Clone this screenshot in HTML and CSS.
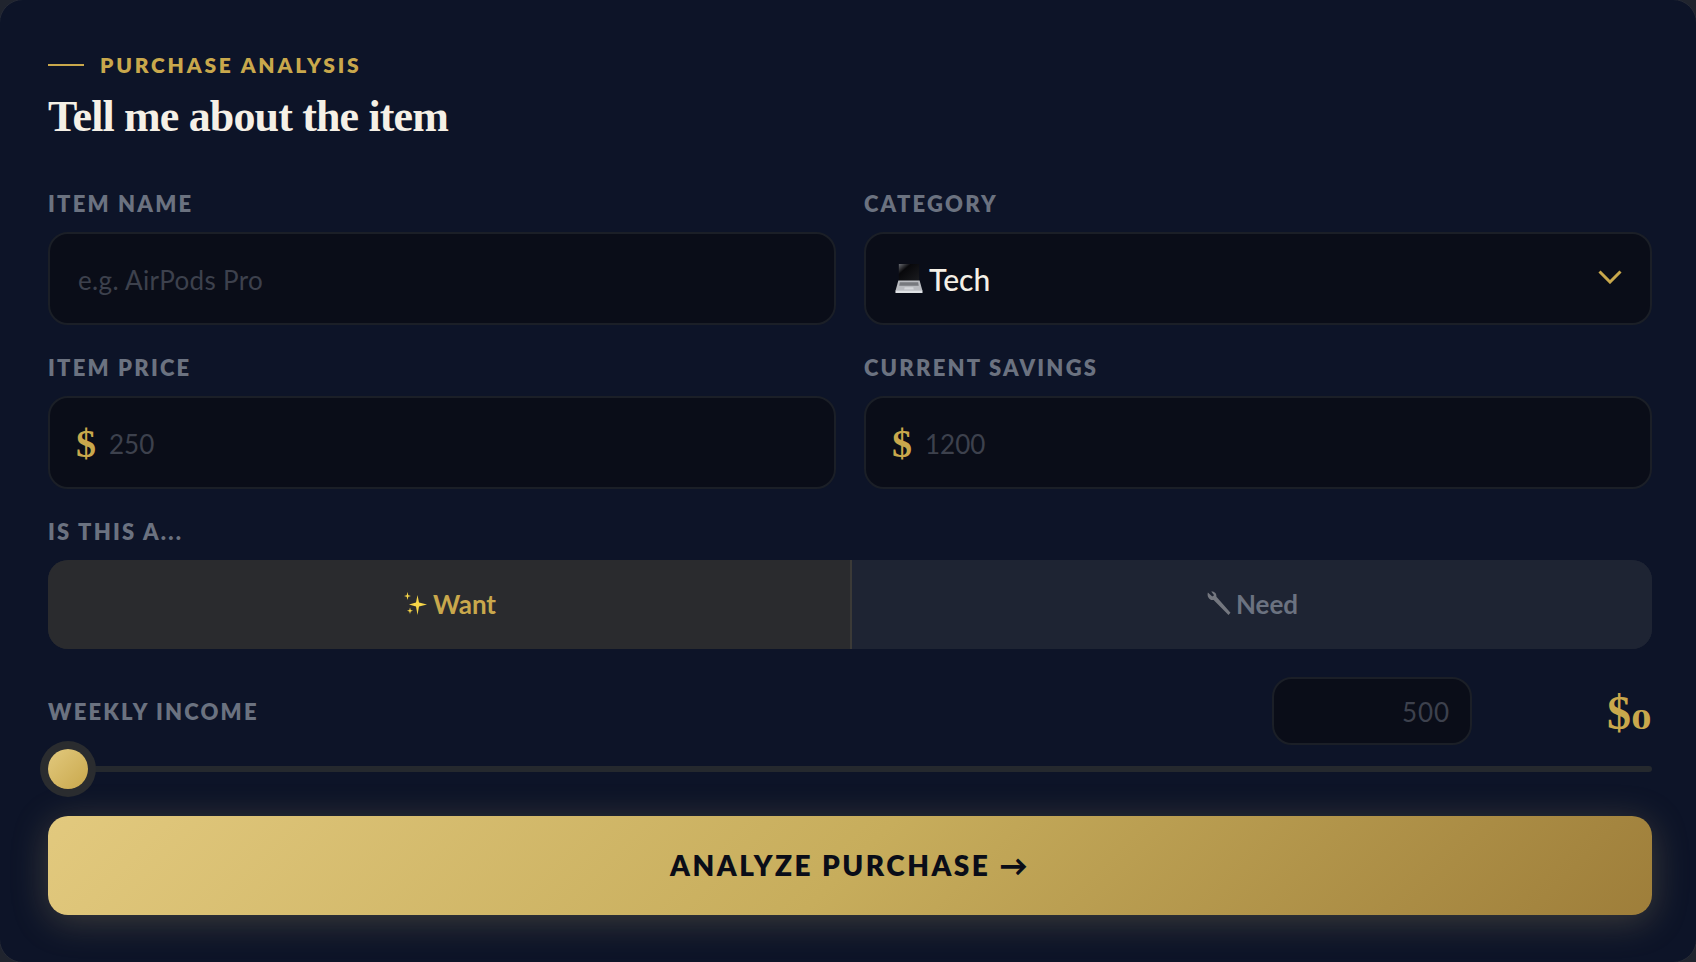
FILE: index.html
```html
<!DOCTYPE html>
<html lang="en">
<head>
<meta charset="utf-8">
<title>Purchase Analysis</title>
<link rel="stylesheet" href="styles.css">
</head>
<body>
<main class="card">
  <div class="eyebrow"><span class="eyebrow-line"></span><span>PURCHASE ANALYSIS</span></div>
  <h1 class="title">Tell me about the item</h1>
  <div class="grid">
    <div class="field">
      <label class="label" for="name">ITEM NAME</label>
      <div class="control"><input class="input input-name" id="name" placeholder="e.g. AirPods Pro"></div>
    </div>
    <div class="field">
      <span class="label">CATEGORY</span>
      <div class="control select">
        <svg class="emoji laptop" viewBox="0 0 30 30" aria-hidden="true">
          <defs><linearGradient id="scr" x1="0" y1="0" x2="1" y2="1"><stop offset="0" stop-color="#6a6c72"/><stop offset=".3" stop-color="#08080b"/><stop offset="1" stop-color="#1b1c20"/></linearGradient></defs>
          <path d="M5 0h21v18H5z" fill="url(#scr)"/>
          <path d="M4.500 17h22l3 11H1.500z" fill="#b9bbc0"/>
          <path d="M6 19h19l.6 3.500H5.400z" fill="#77797e"/>
          <path d="M11 24h9l.4 2.500h-9.800z" fill="#d4d6da"/>
          <path d="M1.500 27.600h28V30h-28z" fill="#e0e2e6"/>
        </svg>
        <span class="select-value">Tech</span>
        <svg class="chevron" viewBox="0 0 24 14" aria-hidden="true"><path d="M1.500 1.500 12 12 22.500 1.500" fill="none" stroke="#c9a84c" stroke-width="3"/></svg>
      </div>
    </div>
    <div class="field">
      <label class="label" for="price">ITEM PRICE</label>
      <div class="control"><span class="currency">$</span><input class="input" id="price" placeholder="250"></div>
    </div>
    <div class="field">
      <label class="label" for="savings">CURRENT SAVINGS</label>
      <div class="control"><span class="currency">$</span><input class="input" id="savings" placeholder="1200"></div>
    </div>
  </div>
  <div class="label-block">IS THIS A...</div>
  <div class="toggle">
    <button class="toggle-btn active" type="button">
      <svg class="emoji spark" viewBox="0 0 24 24" aria-hidden="true">
        <path d="M13.500 3 15 10.500 23 12.500 15 14.500 13.500 23 12 14.500 5 12.500 12 10.500z" fill="#f7d648"/>
        <path d="M3.500 0 4.300 3.200 7 4 4.300 4.800 3.500 8 2.700 4.800 0 4 2.700 3.200z" fill="#f7d648"/>
        <path d="M6 15.500 6.700 18 9 18.800 6.700 19.500 6 22 5.300 19.500 3 18.800 5.300 18z" fill="#f7d648"/>
      </svg>
      <span>Want</span>
    </button>
    <button class="toggle-btn need" type="button">
      <svg class="emoji wrench" viewBox="0 0 24 24" aria-hidden="true">
        <path d="M1.800 1.500 6 5.300 7.800 4 5 .5C8 0 10.300 2.400 10 5.400L23.500 20.800 21.600 23 7.300 8.600C4 9.500.5 6 1.800 1.500z" fill="#74777f"/>
      </svg>
      <span>Need</span>
    </button>
  </div>
  <div class="income-row">
    <label class="label income-label" for="income">WEEKLY INCOME</label>
    <input class="income-input" id="income" placeholder="500">
    <output class="income-value">$<span class="zero">0</span></output>
  </div>
  <input class="slider" type="range" min="0" max="100" value="0" aria-label="Weekly income">
  <button class="submit" type="button">ANALYZE PURCHASE →</button>
</main>
</body>
</html>
```
FILE: styles.css
```css
* { box-sizing: border-box; }
html, body { height: 100%; }
body {
  margin: 0;
  background: #20242e;
  font-family: "Lato", "Open Sans", sans-serif;
  overflow: hidden;
}
.card {
  width: calc(100% + 2px);
  height: 964px;
  margin: -1px;
  padding: 52px 44px 0 48px;
  background: #0d1428;
  border: 1px solid #262a36;
  border-radius: 24px;
}
.eyebrow {
  display: flex;
  align-items: center;
  gap: 16px;
  height: 24px;
  color: #c9a84c;
  font-size: 21px;
  font-weight: 800;
  letter-spacing: 2.800px;
}
.eyebrow-line { width: 36px; height: 2px; margin-top: 2px; background: #c9a84c; }
.title {
  margin: 13px 0 0;
  height: 56px;
  color: #f5f0e6;
  font-family: "Liberation Serif", serif;
  font-size: 44px;
  font-weight: 700;
  line-height: 56px;
  letter-spacing: -.85px;
}
.grid {
  display: grid;
  grid-template-columns: 1fr 1fr;
  gap: 31px 28px;
  margin-top: 47px;
}
.field { display: flex; flex-direction: column; gap: 16px; }
.label, .label-block {
  color: #6b7280;
  font-size: 22px;
  font-weight: 800;
  letter-spacing: 2.200px;
  line-height: 24px;
}
.control {
  display: flex;
  align-items: center;
  height: 93px;
  padding: 0 28px;
  background: #0a0d18;
  border: 2px solid #1b1f27;
  border-radius: 20px;
}
.input, .income-input {
  flex: 1;
  min-width: 0;
  padding: 3px 0 0;
  background: none;
  border: 0;
  outline: 0;
  color: #f5f0e6;
  font: 400 26px "Lato", sans-serif;
}
.input-name { letter-spacing: .35px; }
.input::placeholder, .income-input::placeholder { color: #3d414d; opacity: 1; }
.currency {
  margin: 3px 13px 0 -2px;
  color: #c9a84c;
  font-family: "Liberation Serif", serif;
  font-size: 40px;
  font-weight: 700;
  line-height: 1;
}
.select { color: #f5f0e6; font-size: 30px; font-weight: 500; }
.emoji { flex: none; display: block; }
.laptop { width: 29px; height: 29px; margin-right: 6px; }
.select-value { flex: 1; }
.chevron { width: 24px; height: 14px; margin-top: -3px; }
.label-block { margin-top: 31px; }
.toggle {
  display: flex;
  height: 89px;
  margin-top: 16px;
  overflow: hidden;
  border-radius: 20px;
  background: #1e2433;
}
.toggle-btn {
  flex: 1 1 0;
  display: flex;
  align-items: center;
  justify-content: center;
  gap: 5px;
  padding: 0 0 2px;
  border: 0;
  background: #1e2433;
  color: #6b7280;
  font: 700 26px "Lato", sans-serif;
}
.toggle-btn.active {
  flex: 0 0 804px;
  padding-left: 2px;
  background: #2a2b2e;
  color: #c9a84c;
  border-right: 2px solid #3b3a37;
}
.spark { width: 24px; height: 24px; }
.wrench { width: 25px; height: 25px; }
.income-row {
  display: flex;
  align-items: center;
  height: 68px;
  margin-top: 28px;
}
.income-label { flex: 1; padding-top: 2px; }
.income-input {
  flex: none;
  width: 200px;
  height: 68px;
  padding: 2px 20px 0;
  text-align: right;
  letter-spacing: .9px;
  background: #0a0d18;
  border: 2px solid #1b1f27;
  border-radius: 20px;
}
.income-value {
  width: 180px;
  padding-top: 4px;
  text-align: right;
  color: #c9a84c;
  font-family: "Liberation Serif", serif;
  font-size: 48px;
  font-weight: 700;
  line-height: 60px;
}
.zero {
  display: inline-block;
  width: 21px;
  font-size: 30px;
  line-height: 1;
  text-align: center;
  transform: scaleX(1.35);
}
.slider {
  display: block;
  width: 100%;
  height: 40px;
  margin: 4px 0 0;
  background: none;
  -webkit-appearance: none;
  appearance: none;
  outline: 0;
}
.slider::-webkit-slider-runnable-track {
  height: 6px;
  border-radius: 3px;
  background: #25292e;
}
.slider::-webkit-slider-thumb {
  -webkit-appearance: none;
  width: 40px;
  height: 40px;
  margin-top: -17px;
  border-radius: 50%;
  background: linear-gradient(135deg, #e2c97e, #c9a84c);
  box-shadow: 0 0 0 8px #2a2c2f;
}
.submit {
  display: block;
  width: 100%;
  height: 99px;
  margin-top: 27px;
  padding: 0 0 2px;
  border: 0;
  border-radius: 20px;
  background: linear-gradient(135deg, #e2c97e 0%, #c7ad5c 50%, #9e7e3a 100%);
  box-shadow: 0 6px 36px rgba(190, 170, 110, .28);
  color: #0a0d18;
  font: 800 28px "Lato", sans-serif;
  letter-spacing: 2.500px;
}
```
